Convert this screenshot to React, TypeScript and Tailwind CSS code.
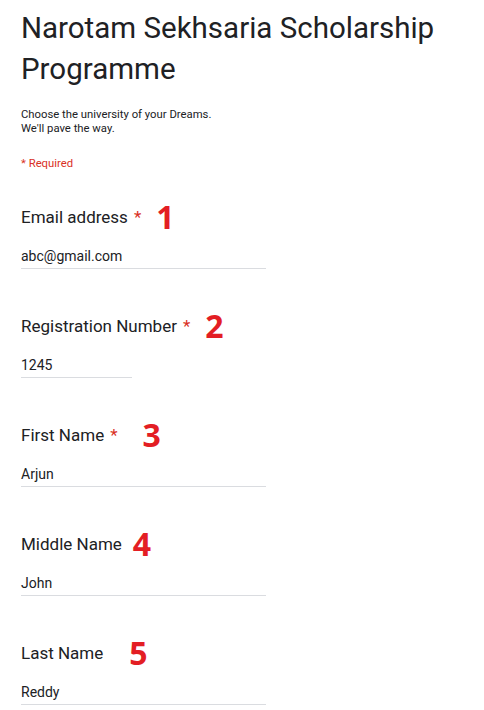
import React from "react";

type Field = {
  label: string;
  required: boolean;
  value: string;
  num: string;
  gap: string;
  width: string;
};

const fields: Field[] = [
  { label: "Email address", required: true, value: "abc@gmail.com", num: "1", gap: "ml-[15px]", width: "w-[245px]" },
  { label: "Registration Number", required: true, value: "1245", num: "2", gap: "ml-[15px]", width: "w-[111px]" },
  { label: "First Name", required: true, value: "Arjun", num: "3", gap: "ml-[25px]", width: "w-[245px]" },
  { label: "Middle Name", required: false, value: "John", num: "4", gap: "ml-[11px]", width: "w-[245px]" },
  { label: "Last Name", required: false, value: "Reddy", num: "5", gap: "ml-[26px]", width: "w-[245px]" },
];

export default function App() {
  return (
    <div
      className="min-h-[710px] w-[484px] bg-white px-[21px] pt-2 text-[#202124]"
      style={{ fontFamily: "Roboto, Arial, sans-serif" }}
    >
      <h1 className="text-[29.5px] leading-[41px] font-normal">
        Narotam Sekhsaria Scholarship
        <br />
        Programme
      </h1>
      <p className="mt-[18px] text-[11.3px] leading-[14px]">
        Choose the university of your Dreams.
        <br />
        We'll pave the way.
      </p>
      <p className="mt-[21px] text-[11.3px] leading-[14px] text-[#d93025]">* Required</p>

      <div className="mt-[28px] flex flex-col gap-[39px]">
        {fields.map((f) => (
          <div key={f.label} className="flex flex-col">
            <div className="flex h-[24px] items-baseline text-[17px] leading-[24px]">
              <span>{f.label}</span>
              {f.required && <span className="ml-[6px] text-[#d93025]">*</span>}
              <span
                className={`relative top-[6px] ${f.gap} text-[32px] leading-[24px] font-bold text-[#e31e24]`}
                style={{ fontFamily: '"Open Sans", sans-serif' }}
              >
                {f.num}
              </span>
            </div>
            <div className={`mt-[23px] ${f.width} border-b border-[#dadce0] pb-[2px] text-[14px] leading-[20px]`}>
              {f.value}
            </div>
          </div>
        ))}
      </div>
    </div>
  );
}
